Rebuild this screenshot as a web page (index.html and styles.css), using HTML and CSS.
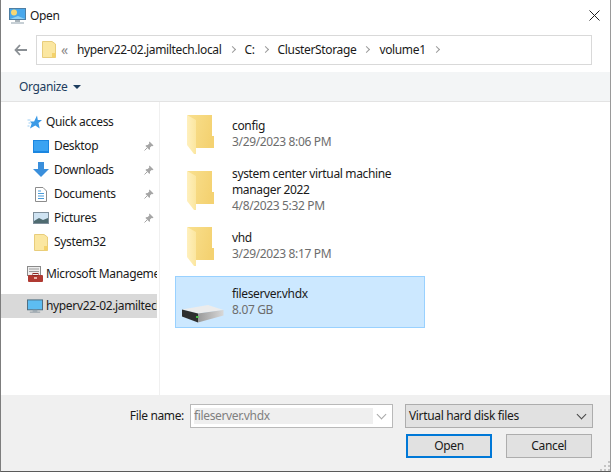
FILE: index.html
```html
<!DOCTYPE html>
<html lang="en">
<head>
    <meta charset="utf-8">
    <title>Open</title>
    <link rel="stylesheet" href="styles.css">
</head>
<body>

<svg class="defs" width="0" height="0">
    <defs>
        <linearGradient id="folder-body" x1="0" y1="0" x2="1" y2="0.3">
            <stop offset="0" stop-color="#f9e08f"/>
            <stop offset="1" stop-color="#f4d272"/>
        </linearGradient>
        <linearGradient id="folder-flap" x1="0" y1="0" x2="1" y2="0">
            <stop offset="0" stop-color="#fff0bd"/>
            <stop offset="1" stop-color="#fbe69f"/>
        </linearGradient>
    </defs>
    <symbol id="folder-open" viewBox="0 0 28 41">
        <path d="M0 1H25V22H27V34H9V10Z" fill="url(#folder-body)"/>
        <path d="M0 1L9 6V40L7 40L0 31Z" fill="url(#folder-flap)"/>
    </symbol>
    <symbol id="folder-small" viewBox="0 0 14 17">
        <path d="M0.5 0.5H10L13.5 3V16.5H0.5Z" fill="#fbe7a1" stroke="#e8cd7c"/>
        <path d="M10 12H13.5V16.5H10Z" fill="#f4d26b"/>
    </symbol>
    <symbol id="pin" viewBox="0 0 10 10">
        <path d="M5.5 0.5L9.5 4.5L8.3 5.2L7.6 4.9L6 6.6L6 8.4L5.2 8.8L1.5 5L2 4.2L3.7 4.1L5.3 2.5L5 1.6Z" fill="#a6a6a6"/>
        <path d="M3 7L0.5 9.5" stroke="#a6a6a6"/>
    </symbol>
    <symbol id="monitor" viewBox="0 0 17 15">
        <rect x="0.5" y="0.5" width="16" height="10.5" fill="#5dbdf2" stroke="#4d6a7c"/>
        <path d="M6 11H11V13H6Z" fill="#9aa7b0"/>
        <path d="M3 13.5H14" stroke="#8b98a1"/>
    </symbol>
</svg>

<div class="window">
    <header class="titlebar">
        <svg class="title-icon" width="17" height="16" viewBox="0 0 17 16">
            <rect x="0.5" y="0.5" width="16" height="11" fill="#49a8ec" stroke="#4e7ea3"/>
            <circle cx="5" cy="4.5" r="3" fill="#f7d774"/>
            <path d="M1 11L9 8L16 11Z" fill="#8fd0f5"/>
            <path d="M6 12H11V14H6Z" fill="#a9b3ba"/>
            <path d="M2 15H15" stroke="#8fa0ab"/>
        </svg>
        <span class="title-text">Open</span>
        <svg class="close-icon" width="11" height="11" viewBox="0 0 11 11">
            <path d="M0.5 0.5L10.5 10.5M10.5 0.5L0.5 10.5" stroke="#222" fill="none"/>
        </svg>
    </header>

    <nav class="navbar">
        <svg class="back-icon" width="13" height="12" viewBox="0 0 13 12">
            <path d="M6 1L1.5 6L6 11M1.5 6H13" stroke="#8a8f94" stroke-width="1.8" fill="none"/>
        </svg>
        <div class="address">
            <svg width="14" height="17"><use href="#folder-small"/></svg>
            <span class="overflow">&laquo;</span>
            <span class="crumb">hyperv22-02.jamiltech.local</span><i class="chev"></i>
            <span class="crumb">C:</span><i class="chev"></i>
            <span class="crumb">ClusterStorage</span><i class="chev"></i>
            <span class="crumb">volume1</span><i class="chev"></i>
        </div>
    </nav>

    <div class="toolbar">
        <span class="organize">Organize</span>
        <i class="caret"></i>
    </div>

    <main class="content">
        <aside class="sidebar">
            <div class="side-row level-1">
                <svg width="15" height="14" viewBox="0 0 15 14">
                    <path d="M9.5 0.5L10.3 5H14.5L11 8L12.2 13.5L7.8 10.6L2.5 13.5L4.2 8.5L2.5 6.5H6.6Z" fill="#3b9ae6"/>
                    <path d="M0 5H3M1 8H3M0 11H2" stroke="#9ccdf2"/>
                </svg>
                <span class="side-label">Quick access</span>
            </div>
            <div class="side-row level-2">
                <span class="side-icon">
                    <svg width="16" height="13" viewBox="0 0 16 13">
                        <rect width="16" height="13" fill="#1b86e0"/>
                        <rect x="1" y="1" width="14" height="10" fill="#3ba3f2"/>
                    </svg>
                </span>
                <span class="side-label">Desktop</span>
                <svg class="pin" width="10" height="10"><use href="#pin"/></svg>
            </div>
            <div class="side-row level-2">
                <span class="side-icon">
                    <svg width="16" height="16" viewBox="0 0 16 16">
                        <path d="M5 0H11V7H16L8 15L0 7H5Z" fill="#3a8fdc"/>
                    </svg>
                </span>
                <span class="side-label">Downloads</span>
                <svg class="pin" width="10" height="10"><use href="#pin"/></svg>
            </div>
            <div class="side-row level-2">
                <span class="side-icon">
                    <svg width="12" height="15" viewBox="0 0 12 15">
                        <path d="M0.5 0.5H8L11.5 4V14.5H0.5Z" fill="#fff" stroke="#8c8c8c"/>
                        <path d="M3 4H6M3 6.5H9M3 9H9M3 11.5H9" stroke="#4a9bd9"/>
                    </svg>
                </span>
                <span class="side-label">Documents</span>
                <svg class="pin" width="10" height="10"><use href="#pin"/></svg>
            </div>
            <div class="side-row level-2">
                <span class="side-icon">
                    <svg width="16" height="12" viewBox="0 0 16 12">
                        <rect x="0.5" y="0.5" width="15" height="11" fill="#cfe3f2" stroke="#7f8f9b"/>
                        <path d="M1 9L6 6L10 8L15 6V11H1Z" fill="#4f6b70"/>
                    </svg>
                </span>
                <span class="side-label">Pictures</span>
                <svg class="pin" width="10" height="10"><use href="#pin"/></svg>
            </div>
            <div class="side-row level-2">
                <span class="side-icon">
                    <svg width="14" height="17"><use href="#folder-small"/></svg>
                </span>
                <span class="side-label">System32</span>
            </div>
            <div class="side-row level-1 group-start">
                <svg width="16" height="16" viewBox="0 0 16 16">
                    <rect x="0.5" y="0.5" width="13" height="9" fill="#eee" stroke="#8a8a8a"/>
                    <path d="M2 3H12M2 5.5H12" stroke="#9a9a9a"/>
                    <rect x="1" y="9" width="15" height="7" rx="1" fill="#b03a32"/>
                    <rect x="6" y="7.5" width="5" height="2" fill="none" stroke="#8e2a24"/>
                    <rect x="7" y="11" width="3" height="2" fill="#e8b0a8"/>
                </svg>
                <span class="side-label">Microsoft Management Console</span>
            </div>
            <div class="side-row level-1 group-start is-current">
                <svg width="17" height="15"><use href="#monitor"/></svg>
                <span class="side-label">hyperv22-02.jamiltech.local</span>
            </div>
        </aside>

        <section class="files">
            <div class="file">
                <svg class="file-icon" width="28" height="41"><use href="#folder-open"/></svg>
                <div class="file-text">
                    <div class="file-name">config</div>
                    <div class="file-meta">3/29/2023 8:06 PM</div>
                </div>
            </div>
            <div class="file">
                <svg class="file-icon" width="28" height="41"><use href="#folder-open"/></svg>
                <div class="file-text">
                    <div class="file-name">system center virtual machine manager 2022</div>
                    <div class="file-meta">4/8/2023 5:32 PM</div>
                </div>
            </div>
            <div class="file">
                <svg class="file-icon" width="28" height="41"><use href="#folder-open"/></svg>
                <div class="file-text">
                    <div class="file-name">vhd</div>
                    <div class="file-meta">3/29/2023 8:17 PM</div>
                </div>
            </div>
            <div class="file is-selected">
                <svg class="disk-icon" width="42" height="18" viewBox="0 0 42 18">
                    <defs>
                        <linearGradient id="disk-side" x1="0" y1="0" x2="1" y2="0">
                            <stop offset="0" stop-color="#9a9a9a"/>
                            <stop offset="1" stop-color="#d8d8d8"/>
                        </linearGradient>
                    </defs>
                    <path d="M0 4.5L26 0L41.5 5L16 8.5Z" fill="#ececec"/>
                    <path d="M16 8.5L41.5 5V10.5L16 17.5Z" fill="url(#disk-side)"/>
                    <path d="M0 4.5L16 8.5V17.5L0 11.5Z" fill="#2e2f2f"/>
                    <rect x="14" y="11" width="2.5" height="2" fill="#46c046"/>
                </svg>
                <div class="file-text">
                    <div class="file-name">fileserver.vhdx</div>
                    <div class="file-meta">8.07 GB</div>
                </div>
            </div>
        </section>
    </main>

    <footer class="bottom">
        <div class="name-row">
            <label class="name-label">File name:</label>
            <div class="name-input">
                <span class="name-value">fileserver.vhdx</span>
                <i class="drop drop-light"></i>
            </div>
            <div class="type-select">
                <span>Virtual hard disk files</span>
                <i class="drop"></i>
            </div>
        </div>
        <div class="button-row">
            <button class="btn btn-default">Open</button>
            <button class="btn">Cancel</button>
        </div>
        <svg class="grip" width="10" height="10" viewBox="0 0 10 10">
            <path d="M8 0h2v2H8zM4 4h2v2H4zM8 4h2v2H8zM0 8h2v2H0zM4 8h2v2H4zM8 8h2v2H8z" fill="#c4c4c4"/>
        </svg>
    </footer>
</div>

</body>
</html>
```

FILE: styles.css
```css
* {
    box-sizing: border-box;
}

body {
    font: normal 12px/16px "Noto Sans", sans-serif;
    letter-spacing: -0.35px;
    color: #1a1a1a;
    margin: 0;
    padding: 0;
    background: #fff;
}

.defs {
    display: block;
    height: 0;
}

.window {
    display: flex;
    flex-direction: column;
    position: relative;
    width: 611px;
    height: 472px;
    overflow: hidden;
    border-left: 1px solid #7d7d7d;
    border-right: 1px solid #9a9a9a;
    border-bottom: 1px solid #5a5a5a;
}

/* title */
.titlebar {
    display: flex;
    align-items: center;
    height: 31px;
    padding: 0 10px 0 8px;
}

.title-text {
    margin-left: 4px;
}

.close-icon {
    margin-left: auto;
}

/* back arrow + address */
.navbar {
    display: flex;
    align-items: center;
    height: 41px;
    padding: 4px 18px 8px 13px;
}

.back-icon {
    margin-right: 9px;
}

.address {
    display: flex;
    align-items: center;
    flex: 1;
    height: 30px;
    padding: 0 5px;
    border: 1px solid #d9d9d9;
    white-space: nowrap;
}

.overflow {
    width: 16px;
    margin-left: 5px;
    font-size: 14px;
    color: #8a8a8a;
}

.chev {
    display: block;
    width: 5px;
    height: 5px;
    margin: 0 10px 0 8px;
    border-top: 1.5px solid #9a9a9a;
    border-right: 1.5px solid #9a9a9a;
    transform: rotate(45deg);
}

/* organize */
.toolbar {
    display: flex;
    align-items: center;
    height: 30px;
    padding-left: 18px;
    background: #f3f5f6;
    border-bottom: 1px solid #e3e3e3;
}

.organize {
    color: #1c3d5e;
}

.caret {
    display: block;
    margin-left: 6px;
    border-top: 4px solid #1c3d5e;
    border-left: 4px solid transparent;
    border-right: 4px solid transparent;
}

/* sidebar and file list */
.content {
    display: flex;
    flex: 1;
    min-height: 0;
}

.sidebar {
    width: 159px;
    flex: none;
    padding: 8px 2px 0 0;
    border-right: 1px solid #f0f0f0;
    overflow: hidden;
}

.side-row {
    display: flex;
    align-items: center;
    height: 24px;
    white-space: nowrap;
    overflow: hidden;
}

.level-1 {
    padding-left: 26px;
}

.level-1 svg {
    flex: none;
    width: 16px;
}

.level-1 .side-label {
    margin-left: 3px;
}

.level-2 {
    padding-left: 31px;
}

.side-icon {
    display: flex;
    align-items: center;
    justify-content: center;
    width: 17px;
    margin-right: 5px;
}

.pin {
    position: absolute;
    left: 143px;
}

.group-start {
    margin-top: 8px;
}

.is-current {
    background: #d9d9d9;
}

.files {
    flex: 1;
    padding: 6px 0 0 15px;
}

.file {
    display: flex;
    align-items: center;
    width: 250px;
    height: 52px;
    margin-bottom: 4px;
    border: 1px solid transparent;
}

.file-icon {
    margin: 0 17px 0 11px;
    flex: none;
}

.disk-icon {
    margin: 24px 8px 0 6px;
    flex: none;
}

.file-text {
    width: 170px;
}

.file-meta {
    color: #6d6d6d;
}

.is-selected {
    background: #cce8ff;
    border-color: #99d1ff;
}

/* file name, type and buttons */
.bottom {
    position: relative;
    height: 76px;
    flex: none;
    padding: 9px 17px 0 0;
    background: #f0f0f0;
}

.name-row {
    display: flex;
    align-items: center;
    height: 24px;
}

.name-label {
    width: 183px;
    text-align: right;
}

.name-input {
    display: flex;
    align-items: center;
    width: 203px;
    height: 24px;
    margin-left: 6px;
    padding: 0 4px 0 3px;
    background: #fff;
    border: 1px solid #b9b9b9;
}

.name-value {
    display: block;
    width: 179px;
    color: #7f7f7f;
    background: #efefef;
}

.drop {
    display: block;
    width: 7px;
    height: 7px;
    margin-left: auto;
    margin-right: 3px;
    margin-top: -4px;
    border-right: 1px solid #444;
    border-bottom: 1px solid #444;
    transform: rotate(45deg);
}

.drop-light {
    border-color: #a8a8a8;
}

.type-select {
    display: flex;
    align-items: center;
    width: 188px;
    height: 24px;
    margin-left: 12px;
    padding: 0 4px 0 3px;
    background: #e1e1e1;
    border: 1px solid #adadad;
}

.button-row {
    display: flex;
    justify-content: flex-end;
    gap: 14px;
    margin-top: 6px;
    margin-right: 1px;
}

.btn {
    width: 86px;
    height: 24px;
    padding: 0;
    font: inherit;
    letter-spacing: inherit;
    color: #1a1a1a;
    background: #e1e1e1;
    border: 1px solid #adadad;
}

.btn-default {
    border: 2px solid #0078d7;
}

.grip {
    position: absolute;
    right: 0;
    bottom: 0;
}
```
